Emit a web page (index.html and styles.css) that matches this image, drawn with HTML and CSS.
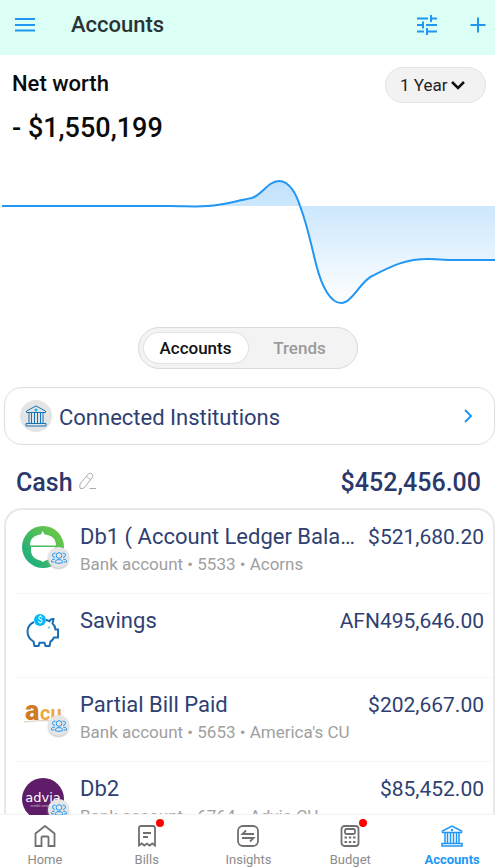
FILE: index.html
```html
<!DOCTYPE html>
<html lang="en">
<head>
<meta charset="utf-8">
<meta name="viewport" content="width=device-width, initial-scale=1">
<title>Accounts</title>
<link rel="stylesheet" href="styles.css">
</head>
<body>
<svg class="defs" aria-hidden="true">
  <symbol id="bank" viewBox="0 0 22 22">
    <path d="M1.500 7.500V6L11 1l9.500 5v1.500zM3 18.500h16M1 21h20v-2.500H1zM4 7.500v11M6.500 7.500v11M9.500 7.500v11M12.500 7.500v11M15.500 7.500v11M18 7.500v11"/>
  </symbol>
  <symbol id="people" viewBox="0 0 16 12">
    <circle cx="8" cy="3.500" r="2.800"/>
    <path d="M4.300 10.800V9.300Q4.800 7.600 8 7.600t3.700 1.700v1.500q-3.700 1-7.400 0zM4.500 1.200Q1.700.6 1.500 3q.2 2.500 2.500 2.400M11.500 1.200q2.800-.6 3 1.800-.2 2.500-2.500 2.400M3 10H.600V8.400Q1 7 3.800 7.200M13 10h2.400V8.400Q15 7 12.200 7.200"/>
  </symbol>
</svg>

<header class="topbar">
  <button class="icon-button" type="button" aria-label="Menu">
    <svg class="icon" viewBox="0 0 20 20"><path d="M0 4h20M0 10h20M0 15.500h20"/></svg>
  </button>
  <h1 class="topbar-title">Accounts</h1>
  <button class="icon-button" type="button" aria-label="Filter accounts">
    <svg class="icon" viewBox="0 0 20 20"><path d="M0 3.500h11M14 3.500h6M14 0v7M0 10h6M6 6.500v7M9 10h11M0 16.500h7M10 13v7M10 16.500h10"/></svg>
  </button>
  <button class="icon-button" type="button" aria-label="Add account">
    <svg class="icon" viewBox="0 0 20 20"><path d="M2.500 10h15M10 2.500v15"/></svg>
  </button>
</header>

<main class="content">
  <section class="worth">
    <div>
      <h2 class="worth-label">Net worth</h2>
      <p class="worth-value">- $1,550,199</p>
    </div>
    <div class="period">
      <select class="period-select" aria-label="Period">
        <option>1 Year</option>
      </select>
      <svg class="period-arrow" viewBox="0 0 14 10"><path d="M1 2l6 6 6-6"/></svg>
    </div>
  </section>

  <svg class="chart" viewBox="0 165 495 150" role="img" aria-label="Net worth over one year">
    <defs>
      <linearGradient id="fade" gradientUnits="userSpaceOnUse" x1="0" y1="181" x2="0" y2="303">
        <stop offset="0" stop-color="#2196f3" stop-opacity=".28"/>
        <stop offset=".2" stop-color="#2196f3" stop-opacity=".23"/>
        <stop offset="1" stop-color="#2196f3" stop-opacity="0"/>
      </linearGradient>
    </defs>
    <path fill="url(#fade)" d="M2 206H170C185 206 195 207 208 206C225 205 235 201 252 198C262 195 268 181 279 181C290 181 297 196 300 206C307 224 310 240 316 264C322 288 331 303 341 303C352 303 360 282 372 276C392 266 405 259 428 259C437 259 444 260 455 260H495V206z"/>
    <path class="chart-line" d="M2 206H170C185 206 195 207 208 206C225 205 235 201 252 198C262 195 268 181 279 181C290 181 297 196 300 206C307 224 310 240 316 264C322 288 331 303 341 303C352 303 360 282 372 276C392 266 405 259 428 259C437 259 444 260 455 260H495"/>
  </svg>

  <div class="tabs">
    <button class="tab tab-active" type="button">Accounts</button>
    <button class="tab" type="button">Trends</button>
  </div>

  <a class="institutions" href="#institutions">
    <span class="institutions-icon"><svg viewBox="0 0 22 22"><use href="#bank"/><circle cx="11" cy="5" r="1.500"/></svg></span>
    <span class="institutions-name">Connected Institutions</span>
    <svg class="institutions-arrow" viewBox="0 0 10 14"><path d="M2 1l6 6-6 6"/></svg>
  </a>

  <div class="group-head">
    <h2 class="group-title">Cash</h2>
    <button class="edit" type="button" aria-label="Edit Cash">
      <svg viewBox="0 0 18 18"><path d="M1 12L9.500 1.800q1.500-1.500 3.300 0t.7 3.300L5.500 15.500q-1 1-3.500 1-1.500 0-1.200-1.500zM7.500 4.500l4.200 3.300M10.500 16.500H17"/></svg>
    </button>
    <span class="group-total">$452,456.00</span>
  </div>

  <ul class="accounts">
    <li class="account">
      <span class="logo">
        <svg class="logo-image" viewBox="0 0 42 42">
          <defs><linearGradient id="leaf" x1="0" y1="1" x2="1" y2="0"><stop offset=".2" stop-color="#25b07b"/><stop offset=".8" stop-color="#65c549"/></linearGradient></defs>
          <circle cx="21" cy="21" r="21" fill="url(#leaf)"/>
          <path fill="#fff" d="M8 19.500C8 12 13 9 19 8.500Q20 7 20 5q2 1 2.500 3.500C29 9 34 12 34 19.500zM9 21h24v3c0 6-4 9.500-9.500 10.500L21 36l-2.500-1.500C13 33.500 9 30 9 24z"/>
        </svg>
        <span class="badge"><svg viewBox="0 0 16 12"><use href="#people"/></svg></span>
      </span>
      <span class="account-text">
        <span class="account-name">Db1 ( Account Ledger Balance )</span>
        <span class="account-meta">Bank account • 5533 • Acorns</span>
      </span>
      <span class="account-amount">$521,680.20</span>
    </li>
    <li class="account">
      <span class="logo">
        <svg class="logo-image" viewBox="0 0 42 42">
          <path class="pig" d="M24 10q2 .3 3.500 1.200Q28.500 8.500 31.500 9l-1 4.500q2.500 2 3 6h2.500v8h-4q-1.500 3-3.500 4l-1 4.500h-4l-1-3.200h-5L16.500 36h-4l-1-4.500Q5.500 28 5.500 21.500T12 12"/>
          <circle cx="18" cy="10" r="6" fill="#00b9f8"/>
          <circle cx="27" cy="17.500" r="1" fill="#3cc6f5"/>
          <text class="pig-coin" x="18" y="13">$</text>
        </svg>
      </span>
      <span class="account-text">
        <span class="account-name">Savings</span>
      </span>
      <span class="account-amount">AFN495,646.00</span>
    </li>
    <li class="account">
      <span class="logo">
        <svg class="logo-image" viewBox="0 0 42 42">
          <text class="acu-big" x="3" y="26">a</text>
          <text class="acu-small" x="18" y="26">cu</text>
          <path d="M2 28q14-2 36-1" fill="none" stroke="#d9c9b8"/>
        </svg>
        <span class="badge"><svg viewBox="0 0 16 12"><use href="#people"/></svg></span>
      </span>
      <span class="account-text">
        <span class="account-name">Partial Bill Paid</span>
        <span class="account-meta">Bank account • 5653 • America's CU</span>
      </span>
      <span class="account-amount">$202,667.00</span>
    </li>
    <li class="account">
      <span class="logo">
        <svg class="logo-image" viewBox="0 0 42 42">
          <circle cx="21" cy="21" r="21" fill="#5f1c68"/>
          <text class="advia" x="21" y="24">advia</text>
          <text class="advia-sub" x="19" y="29">credit union</text>
        </svg>
        <span class="badge"><svg viewBox="0 0 16 12"><use href="#people"/></svg></span>
      </span>
      <span class="account-text">
        <span class="account-name">Db2</span>
        <span class="account-meta">Bank account • 6764 • Advia CU</span>
      </span>
      <span class="account-amount">$85,452.00</span>
    </li>
  </ul>
</main>

<nav class="nav">
  <a class="nav-item" href="#home">
    <svg class="nav-icon" viewBox="0 0 22 22"><path d="M1.500 8.500L11 1l9.500 7.500V21h-6v-8.500q0-1-1-1h-5q-1 0-1 1V21h-6z"/></svg>
    <span>Home</span>
  </a>
  <a class="nav-item" href="#bills">
    <svg class="nav-icon" viewBox="0 0 22 22"><path d="M3 20.500V3q0-2 2-2h12q2 0 2 2v17.500l-2.700-2-2.600 2-2.700-2-2.700 2-2.600-2zM7 8h8M7 12h5"/></svg>
    <i class="dot"></i>
    <span>Bills</span>
  </a>
  <a class="nav-item" href="#insights">
    <svg class="nav-icon" viewBox="0 0 22 22"><rect x="1" y="1" width="20" height="20" rx="5"/><path d="M17 9H5.500L9 5.500M5 13h11.500L13 16.500"/></svg>
    <span>Insights</span>
  </a>
  <a class="nav-item" href="#budget">
    <svg class="nav-icon" viewBox="0 0 22 22"><rect x="2.500" y="1" width="17" height="20" rx="3"/><rect x="6" y="4" width="10" height="5" rx="1.500"/><path d="M5.500 12.500h2.500M9.800 12.500h2.400M14 12.500h2.500M5.500 17h2.500M9.800 17h2.400M14 17h2.500"/></svg>
    <i class="dot"></i>
    <span>Budget</span>
  </a>
  <a class="nav-item nav-active" href="#accounts" aria-current="page">
    <svg class="nav-icon" viewBox="0 0 22 22"><use href="#bank"/><circle cx="11" cy="5" r=".5"/></svg>
    <span>Accounts</span>
  </a>
</nav>
</body>
</html>
```
FILE: styles.css
```css
* {
  box-sizing: border-box;
}

body {
  display: flex;
  flex-direction: column;
  height: 100vh;
  margin: 0;
  overflow: hidden;
  background: #fff;
  color: #0b0b0b;
  font-family: Roboto, "Liberation Sans", sans-serif;
}

h1, h2, p, ul {
  margin: 0;
  padding: 0;
}

button, select {
  border: 0;
  background: none;
  font: inherit;
  color: inherit;
}

a {
  color: inherit;
  text-decoration: none;
}

svg {
  display: block;
  fill: none;
}

.defs {
  position: absolute;
  width: 0;
  height: 0;
}

.topbar {
  display: flex;
  flex: none;
  align-items: center;
  gap: 31px;
  height: 55px;
  padding: 0 7px 5px 15px;
  background: #dbfef5;
}

.icon-button {
  padding: 0;
}

.icon {
  width: 20px;
  height: 20px;
  stroke: #2196f3;
  stroke-width: 2;
}

.topbar-title {
  flex: 1;
  margin-left: 5px;
  color: #2a3436;
  font-size: 22px;
  font-weight: 500;
  line-height: 28px;
}

.content {
  flex: 1;
  min-height: 0;
  overflow: hidden;
}

.worth {
  display: flex;
  justify-content: space-between;
  align-items: flex-start;
  padding: 12px 9px 0 12px;
}

.worth-label {
  font-size: 22px;
  font-weight: 500;
  line-height: 34px;
}

.worth-value {
  margin-top: 8px;
  font-size: 27px;
  font-weight: 500;
  line-height: 38px;
}

.period {
  display: grid;
  align-items: center;
}

.period-select {
  grid-area: 1 / 1;
  height: 36px;
  padding: 0 37px 0 14px;
  border: 1px solid #e2e2e2;
  border-radius: 18px;
  background: #f2f2f2;
  color: #222;
  font-size: 17px;
  appearance: none;
}

.period-arrow {
  grid-area: 1 / 1;
  justify-self: end;
  width: 14px;
  height: 10px;
  margin-right: 21px;
  stroke: #111;
  stroke-width: 2.5;
  pointer-events: none;
}

.chart {
  width: 100%;
  margin-top: 18px;
}

.chart-line {
  stroke: #2196f3;
  stroke-width: 2;
}

.tabs {
  display: grid;
  grid-template-columns: 1fr 1fr;
  width: 220px;
  height: 42px;
  margin: 12px auto 0;
  padding: 5px;
  border: 1px solid #dadada;
  border-radius: 21px;
  background: #f3f3f3;
}

.tab {
  padding: 0;
  border-radius: 16px;
  color: #9b9b9b;
  font-size: 17px;
  font-weight: 500;
}

.tab-active {
  background: #fff;
  color: #111;
  box-shadow: 0 0 0 1px #e2e2e2;
}

.institutions {
  display: flex;
  align-items: center;
  gap: 7px;
  height: 58px;
  margin: 18px 0 0 4px;
  padding: 0 21px 0 15px;
  border: 1px solid #dedede;
  border-radius: 18px;
  color: #2f3f72;
}

.institutions-icon {
  padding: 5px;
  border-radius: 50%;
  background: #e4e4e4;
  stroke: #1673b8;
}

.institutions-icon svg {
  width: 22px;
  height: 22px;
}

.institutions-icon circle {
  fill: #12b5f5;
  stroke: none;
}

.institutions-name {
  flex: 1;
  padding-top: 2px;
  font-size: 22px;
}

.institutions-arrow {
  width: 10px;
  height: 14px;
  stroke: #2196f3;
  stroke-width: 2;
}

.group-head {
  display: flex;
  align-items: center;
  gap: 6px;
  height: 63px;
  padding: 12px 14px 0 16px;
  color: #2a386b;
  font-size: 25px;
  font-weight: 500;
}

.group-title {
  font-size: 25px;
  font-weight: 500;
}

.edit {
  padding: 0 0 3px;
  stroke: #aaa;
}

.edit svg {
  width: 18px;
  height: 18px;
}

.group-total {
  margin-left: auto;
}

.accounts {
  margin-left: 4px;
  padding-left: 10px;
  border: 2px solid #e8e8e8;
  border-radius: 18px;
  list-style: none;
}

.account {
  display: flex;
  align-items: flex-start;
  gap: 8px;
  height: 84px;
  padding: 12px 9px 0 6px;
  border-bottom: 1px solid #f6f6f6;
}

.logo {
  position: relative;
  flex: none;
  margin: 4px 8px 0 0;
}

.logo-image {
  width: 42px;
  height: 42px;
}

.badge {
  position: absolute;
  right: -5px;
  bottom: 0;
  display: grid;
  place-items: center;
  width: 21px;
  height: 21px;
  border-radius: 50%;
  background: #e6e6e6;
  box-shadow: 0 1px 2px #bbb;
  stroke: #2196f3;
}

.badge svg {
  width: 16px;
  height: 12px;
}

.account-text {
  display: flex;
  flex: 1;
  flex-direction: column;
  min-width: 0;
}

.account-name {
  overflow: hidden;
  color: #2f3f72;
  font-size: 22px;
  line-height: 30px;
  text-overflow: ellipsis;
  white-space: nowrap;
}

.account-meta {
  color: #a0a0a0;
  font-size: 17px;
  line-height: 24px;
}

.account-amount {
  color: #2f3f72;
  font-size: 21px;
  line-height: 30px;
}

.pig {
  stroke: #1b6fb5;
  stroke-width: 2;
}

.pig-coin {
  fill: #fff;
  font-size: 9px;
  text-anchor: middle;
}

.acu-big {
  fill: #d17a25;
  font: 900 27px Roboto, sans-serif;
}

.acu-small {
  fill: #efa742;
  font: 700 20px Roboto, sans-serif;
}

.advia {
  fill: #fff;
  font: 13px "DejaVu Sans", sans-serif;
  text-anchor: middle;
}

.advia-sub {
  fill: #cdb4d1;
  font-size: 4px;
  text-anchor: middle;
}

.nav {
  display: grid;
  flex: none;
  grid-template-columns: repeat(5, 1fr);
  height: 53px;
  margin: 0 -8px 0 -6px;
  padding-top: 10px;
  background: #fff;
  box-shadow: 0 -1px 1px #f3f3f3;
}

.nav-item {
  position: relative;
  display: flex;
  flex-direction: column;
  align-items: center;
  gap: 4px;
  color: #8c8c8c;
  font-size: 13px;
  line-height: 18px;
}

.nav-icon {
  width: 22px;
  height: 22px;
  stroke: #707070;
  stroke-width: 1.8;
}

.nav-active {
  color: #2196f3;
  font-weight: 700;
}

.nav-active .nav-icon {
  stroke: #2196f3;
  stroke-width: 1.5;
}

.dot {
  position: absolute;
  top: -6px;
  left: calc(50% + 9px);
  width: 8px;
  height: 8px;
  border-radius: 50%;
  background: #f00;
}
```
